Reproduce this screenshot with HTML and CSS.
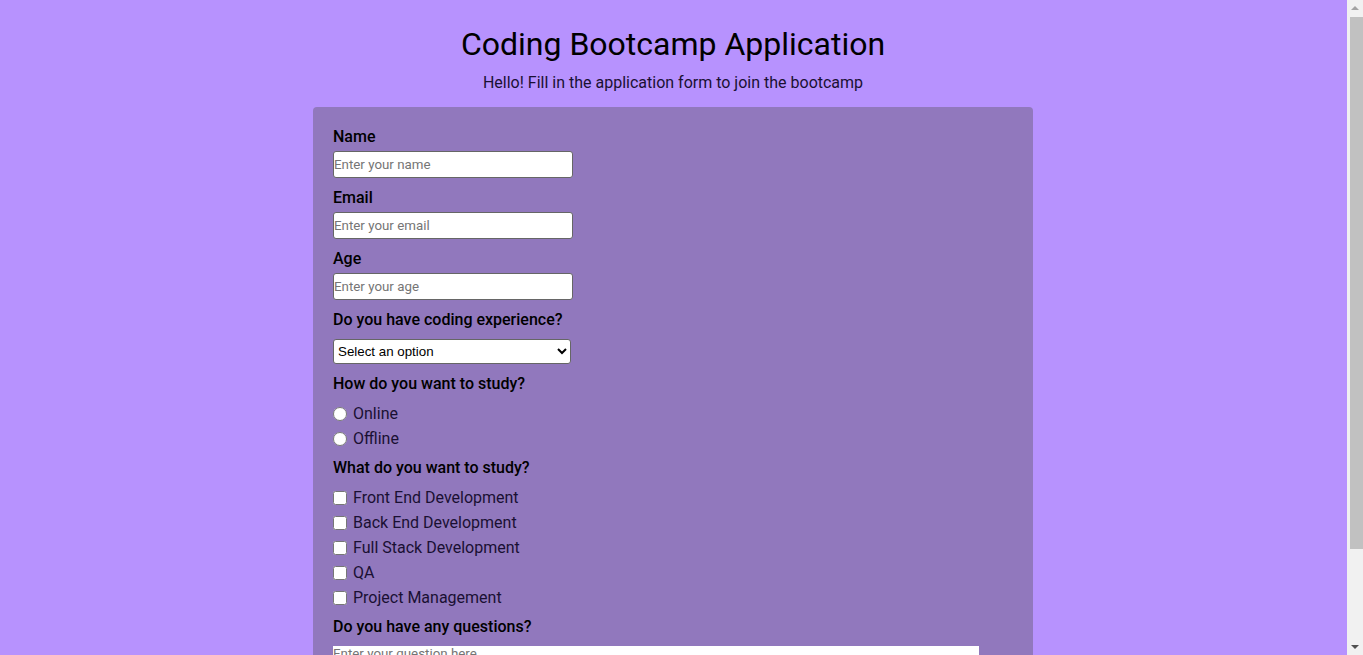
FILE: index.html
```html
<!DOCTYPE html>
<html lang="en">
<head>
<meta charset="utf-8">
<title>Coding Bootcamp Application</title>
<link rel="stylesheet" href="styles.css">
</head>
<body>
<header class="header">
  <h1 class="title">Coding Bootcamp Application</h1>
  <p class="subtitle">Hello! Fill in the application form to join the bootcamp</p>
</header>
<form class="card">
  <div class="group">
    <label class="label" for="name">Name</label>
    <input class="field" id="name" type="text" placeholder="Enter your name">
  </div>
  <div class="group">
    <label class="label" for="email">Email</label>
    <input class="field" id="email" type="email" placeholder="Enter your email">
  </div>
  <div class="group">
    <label class="label" for="age">Age</label>
    <input class="field" id="age" type="number" placeholder="Enter your age">
  </div>
  <div class="group">
    <label class="label label-gap" for="exp">Do you have coding experience?</label>
    <select class="select" id="exp">
      <option>Select an option</option>
      <option>Yes</option>
      <option>No</option>
    </select>
  </div>
  <div class="group group-choices">
    <p class="label label-choices">How do you want to study?</p>
    <label class="choice"><input class="radio" type="radio" name="mode">Online</label>
    <label class="choice"><input class="radio" type="radio" name="mode">Offline</label>
  </div>
  <div class="group group-choices">
    <p class="label label-choices">What do you want to study?</p>
    <label class="choice"><input class="check" type="checkbox">Front End Development</label>
    <label class="choice"><input class="check" type="checkbox">Back End Development</label>
    <label class="choice"><input class="check" type="checkbox">Full Stack Development</label>
    <label class="choice"><input class="check" type="checkbox">QA</label>
    <label class="choice"><input class="check" type="checkbox">Project Management</label>
  </div>
  <div class="group">
    <label class="label label-area" for="q">Do you have any questions?</label>
    <textarea class="area" id="q" placeholder="Enter your question here"></textarea>
  </div>
  <button class="submit" type="submit">Submit</button>
</form>
<div class="scrollbar" aria-hidden="true">
  <span class="arrow arrow-up"></span>
  <span class="thumb"></span>
  <span class="arrow arrow-down"></span>
</div>
</body>
</html>
```

FILE: styles.css
```css
html, body {
  margin: 0;
  padding: 0;
}
body {
  background: #b792fe;
  font-family: Roboto, "Noto Sans", sans-serif;
  color: #000;
  padding: 8px 0 10px;
  margin-right: 17px;
}
.header {
  text-align: center;
}
.title {
  font-size: 32px;
  font-weight: 400;
  margin: 17px 0 0;
  line-height: 38px;
}
.subtitle {
  font-size: 16px;
  margin: 10px 0 0;
  line-height: 19px;
  color: #1a1033;
}
.card {
  width: 680px;
  margin: 15px auto 0;
  padding: 20px;
  background: #9178bd;
  border-radius: 4px;
  display: flex;
  flex-direction: column;
}
.group {
  display: flex;
  flex-direction: column;
  align-items: flex-start;
  margin-bottom: 10px;
}
.group-choices {
  margin-bottom: 7px;
}
.label {
  display: block;
  font-size: 16px;
  font-weight: 500;
  line-height: 19px;
  margin: 0 0 5px;
}
.label-gap {
  margin-bottom: 10px;
}
.label-choices {
  margin-bottom: 8px;
}
.label-area {
  margin-bottom: 10px;
}
.field {
  box-sizing: border-box;
  width: 240px;
  height: 27px;
  padding: 0;
  border: 1px solid #666;
  border-radius: 3px;
  background: #fff;
  font-family: Roboto, sans-serif;
  font-size: 13.333px;
}
.field::placeholder, .area::placeholder {
  color: #757575;
}
.select {
  box-sizing: border-box;
  width: 238px;
  height: 25px;
  border: 1px solid #666;
  border-radius: 3px;
  background: #fff;
  font-family: "Liberation Sans", Arial, sans-serif;
  font-size: 13.333px;
  padding: 0;
  color: #000;
}
.choice {
  display: flex;
  align-items: center;
  font-size: 16px;
  line-height: 19px;
  height: 25px;
  color: #1a1033;
}
.radio, .check {
  margin: 0 6px 0 0;
  width: 14px;
  height: 14px;
}
.area {
  box-sizing: border-box;
  width: 95%;
  height: 60px;
  border: none;
  border-radius: 0;
  padding: 0;
  font-family: Roboto, sans-serif;
  font-size: 13.333px;
  background: #fff;
}
.submit {
  align-self: flex-start;
  font-family: Roboto, sans-serif;
  font-size: 16px;
  padding: 6px 16px;
  border: none;
  border-radius: 4px;
  background: #6a4fa0;
  color: #fff;
}
.scrollbar {
  position: fixed;
  top: 0;
  right: 0;
  width: 16px;
  height: 100vh;
  background: #f1f1f1;
  display: flex;
  flex-direction: column;
  align-items: center;
}
.arrow {
  width: 0;
  height: 0;
  border-left: 4px solid transparent;
  border-right: 4px solid transparent;
}
.arrow-up {
  margin-top: 6px;
  border-bottom: 4px solid #a3a3a3;
}
.arrow-down {
  margin-top: auto;
  margin-bottom: 6px;
  border-top: 4px solid #505050;
}
.thumb {
  margin-top: 7px;
  width: 13px;
  height: 532px;
  background: #c1c1c1;
  margin-left: 3px;
}
```
